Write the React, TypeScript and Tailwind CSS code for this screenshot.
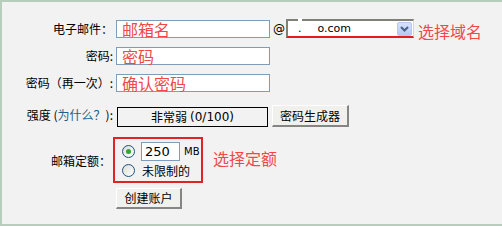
import React from 'react';

const cjk = "font-['Noto_Sans_CJK_SC',sans-serif]";
const latin = "font-['DejaVu_Sans','Noto_Sans_CJK_SC',sans-serif]";

const Label: React.FC<{ children: React.ReactNode; className?: string }> = ({ children, className }) => (
  <div className={`w-[112px] shrink-0 text-right text-[12px] leading-none text-black pr-[1px] ${cjk} ${className ?? ''}`}>
    {children}
  </div>
);

const TextBox: React.FC<{ hint: string }> = ({ hint }) => (
  <div className="ml-[2px] w-[154px] h-[18px] bg-white border border-[#7f9db9] flex items-center pl-[5px]">
    <span className={`text-[16px] leading-none text-[#f04848] ${cjk}`}>{hint}</span>
  </div>
);

const Radio: React.FC<{ checked?: boolean }> = ({ checked }) => (
  <div className="w-[13px] h-[13px] rounded-full border border-[#1c5180] bg-gradient-to-br from-[#dcdcd6] to-white flex items-center justify-center">
    {checked && <div className="w-[5px] h-[5px] rounded-full bg-[#2fa82f]" />}
  </div>
);

const XpButton: React.FC<{ children: React.ReactNode; className?: string }> = ({ children, className }) => (
  <button
    className={`bg-[#f0f0ec] border-t border-l border-t-white border-l-white border-r-2 border-b-2 border-r-[#858585] border-b-[#858585] text-[12px] leading-none text-black ${cjk} flex items-center justify-center ${className ?? ''}`}
  >
    {children}
  </button>
);

export default function App() {
  return (
    <div className="w-[502px] h-[226px] bg-[#f2f2f2] border-l-2 border-t-2 border-b-2 border-[#b8cebd] pt-[17px]">
      {/* email */}
      <div className="flex items-end h-[19px]">
        <Label className="pb-[3px]">电子邮件：</Label>
        <TextBox hint="邮箱名" />
        <span className={`ml-[3px] mb-[3px] text-[12px] leading-none ${latin}`}>@</span>
        <div className="ml-[1px] w-[128px] h-[19px] bg-white border-t-2 border-l-2 border-t-[#808078] border-l-[#808078] border-r border-r-[#d8d8d0] border-b-2 border-b-[#e41c1c] flex items-center relative">
          <span className="absolute left-[10px] top-[-3px] w-[4px] h-[8px] bg-white" />
          <span className={`ml-[10px] text-[11px] leading-none text-black ${latin}`}>.</span>
          <span className={`ml-[16px] text-[11px] leading-none text-black ${latin}`}>o.com</span>
          <div className="ml-auto mr-[1px] w-[15px] h-[14px] rounded-[2px] bg-gradient-to-b from-[#d6e2fc] to-[#b4c8f4] border border-[#b8c8ee] flex items-center justify-center">
            <svg width="9" height="6" viewBox="0 0 9 6">
              <path d="M1 1 L4.5 4.5 L8 1" stroke="#4d6185" strokeWidth="2" fill="none" />
            </svg>
          </div>
        </div>
        <span className={`ml-[4px] mb-[-1px] text-[16px] leading-none text-[#f04848] ${cjk}`}>选择域名</span>
      </div>

      {/* password */}
      <div className="flex items-center h-[18px] mt-[9px]">
        <Label>密码:</Label>
        <TextBox hint="密码" />
      </div>

      {/* password again */}
      <div className="flex items-center h-[18px] mt-[9px]">
        <Label>密码（再一次）:</Label>
        <TextBox hint="确认密码" />
      </div>

      {/* strength */}
      <div className="flex items-end h-[22px] mt-[13px]">
        <Label className="pb-[6px]">
          强度 (<span className="text-[#1e5f8e]">为什么？</span>):
        </Label>
        <div className={`ml-[3px] w-[151px] h-[20px] border border-black flex items-center justify-center text-[12px] leading-none ${cjk}`}>
          非常弱 <span className={`ml-[3px] text-[12px] ${latin}`}>(0/100)</span>
        </div>
        <XpButton className="ml-[4px] w-[77px] h-[22px]">密码生成器</XpButton>
      </div>

      {/* quota */}
      <div className="flex items-center h-[46px] mt-[10px]">
        <Label className="pr-[3px] pt-[1px]">邮箱定额：</Label>
        <div className="ml-[-1px] w-[90px] h-[46px] border-2 border-[#e02424] pl-[7px] flex flex-col">
          <div className="flex items-center mt-[3px]">
            <Radio checked />
            <div className="ml-[6px] w-[39px] h-[19px] bg-white border border-[#7f9db9] flex items-center pl-[3px]">
              <span className={`text-[13px] leading-none ${latin}`}>250</span>
            </div>
            <span className={`ml-[4px] text-[10px] leading-none ${latin}`}>MB</span>
          </div>
          <div className="flex items-center mt-[3px]">
            <Radio />
            <span className={`ml-[7px] text-[12px] leading-none ${cjk}`}>未限制的</span>
          </div>
        </div>
        <span className={`ml-[10px] mb-[4px] text-[16px] leading-none text-[#f04848] ${cjk}`}>选择定额</span>
      </div>

      {/* submit */}
      <div className="flex h-[21px] mt-[5px]">
        <div className="w-[112px] shrink-0" />
        <XpButton className="ml-[2px] w-[66px] h-[21px]">创建账户</XpButton>
      </div>
    </div>
  );
}
